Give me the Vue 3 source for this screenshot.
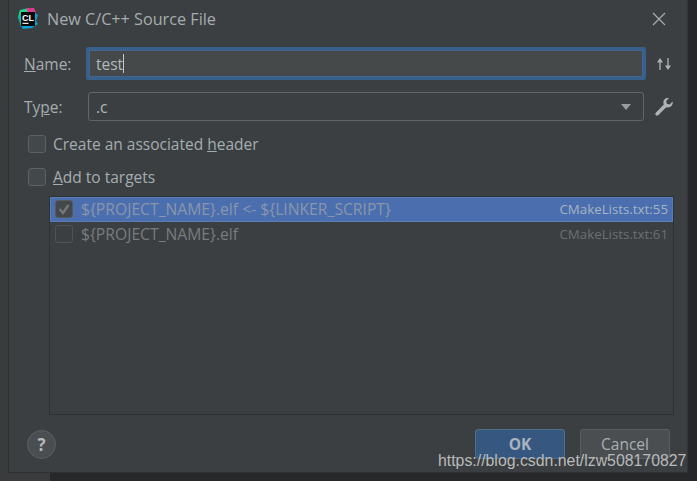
<script setup>
const targets = [
  { name: '${PROJECT_NAME}.elf <- ${LINKER_SCRIPT}', file: 'CMakeLists.txt:55', checked: true },
  { name: '${PROJECT_NAME}.elf', file: 'CMakeLists.txt:61', checked: false },
]
</script>

<template>
  <div class="stage">
    <div class="top">
      <div class="edge-left"></div>
      <main class="dialog">
        <header class="titlebar">
          <svg class="logo" width="21" height="21" viewBox="0 0 21 21">
            <path d="M3 2 L12 0 L14 5 L5 12 L1 9 Z" fill="#21d789" />
            <path d="M1 9 L5 4 L7 16 L4 19 Z" fill="#15b8a6" />
            <path d="M9 0.5 L17 0 L19 5 L12 6 Z" fill="#e8368f" />
            <path d="M15 3 L21 7 L19 13 L21 16 L15 20 L6 21 L4 17 L16 14 Z" fill="#0a9fd8" />
            <rect x="4" y="4" width="14" height="14" fill="#0a0a0a" />
            <text x="5" y="12.6" class="logo-text">CL</text>
            <rect x="5.5" y="14.8" width="6" height="1.2" fill="#e8e8e8" />
          </svg>
          <span class="title">New C/C++ Source File</span>
          <svg class="close" width="14" height="14" viewBox="0 0 14 14">
            <path d="M1 1 L13 13 M13 1 L1 13" stroke="#a9adb0" stroke-width="1.2" fill="none" />
          </svg>
        </header>

        <div class="form-row name-row">
          <label class="label"><u>N</u>ame:</label>
          <div class="input focused"><span>test</span><i class="caret"></i></div>
          <svg class="side-icon" width="18" height="18" viewBox="0 0 18 18">
            <path d="M5 15 V5 M13 3 V13" stroke="#afb1b3" stroke-width="1.3" fill="none" />
            <path d="M2 7.5 L5 3 L8 7.5 Z M10 10.5 L13 15 L16 10.5 Z" fill="#afb1b3" />
          </svg>
        </div>

        <div class="form-row type-row">
          <label class="label">Ty<u>p</u>e:</label>
          <div class="input combo">
            <span>.c</span>
            <i class="arrow"></i>
          </div>
          <svg class="side-icon" width="20" height="20" viewBox="0 0 20 20">
            <path d="M18.6 4.6 L15.6 7.4 L12.8 6.8 L12.2 4 L15 1.2 C12 .4 9.2 2.6 9.4 5.8 C9.4 6.5 9.5 7 9.8 7.6 L2 15.4 C1 16.4 1.2 17.4 1.8 18 C2.5 18.8 3.6 18.9 4.5 18 L12.2 10.2 C15.8 11.2 19.6 8.6 18.6 4.6 Z" fill="#afb1b3" />
          </svg>
        </div>

        <label class="check-row first"><i class="box"></i><span>Create an associated <u>h</u>eader</span></label>
        <label class="check-row second"><i class="box"></i><span><u>A</u>dd to targets</span></label>

        <section class="list">
          <div v-for="t in targets" :key="t.file" class="item" :class="{ selected: t.checked }">
            <i class="mini-box">
              <svg v-if="t.checked" width="14" height="14" viewBox="0 0 14 14">
                <path d="M2.5 7 L6 11 L11.5 3" stroke="#74777a" stroke-width="2.4" fill="none" />
              </svg>
            </i>
            <span class="item-name">{{ t.name }}</span>
            <span class="item-file">{{ t.file }}</span>
          </div>
        </section>

        <footer class="footer">
          <button class="help">?</button>
          <div class="actions">
            <button class="btn primary">OK</button>
            <button class="btn">Cancel</button>
          </div>
        </footer>
      </main>
      <div class="edge-right"></div>
    </div>
    <div class="bottom"><div class="bottom-left"></div></div>
    <div class="watermark">https://blog.csdn.net/lzw508170827</div>
  </div>
</template>

<style>
html, body { margin: 0; background: #26282a; }
</style>

<style scoped>
.stage {
  position: relative;
  width: 697px;
  height: 481px;
  overflow: hidden;
  display: flex;
  flex-direction: column;
  background: #26282a;
  font-family: "Open Sans", "Noto Sans", sans-serif;
  font-size: 15.5px;
  color: #a4adb0;
}
.top { display: flex; height: 473px; }
.edge-left { width: 9px; background: #393b3d; border-right: 1px solid #2e3032; box-sizing: border-box; }
.edge-right { width: 9px; background: #26282a; }
.bottom { flex: 1; background: #26282a; }
.bottom-left { width: 50px; height: 100%; background: #393b3d; }
.dialog {
  width: 679px;
  background: #3c3f41;
  border-bottom: 1px solid #2e3032;
  border-right: 1px solid #323436;
  box-sizing: border-box;
  display: flex;
  flex-direction: column;
  padding-left: 40px;
  padding-right: 14px;
}
.titlebar { display: flex; align-items: center; height: 37px; margin-left: -31px; margin-right: -3px; }
.logo { margin-right: 9px; flex: none; margin-left: -1px; }
.logo-text { font: bold 9px "Liberation Sans", sans-serif; fill: #fff; }
.title { font-size: 16.2px; flex: 1; color: #a4adb0; }
.close { margin-right: 10px; }

.form-row { display: flex; align-items: center; margin-left: -25px; margin-right: -3px; }
.name-row { margin-top: 10px; height: 33px; }
.type-row { margin-top: 12px; height: 29px; }
.label { width: 63px; flex: none; color: #a4adb0; }
.input {
  box-sizing: border-box;
  height: 100%;
  flex: none;
  display: flex;
  align-items: center;
  color: #b0b8bb;
  background: #45494a;
}
.focused {
  width: 560px;
  margin-left: -1px;
  padding-left: 7px;
  background: #45494a;
  border: 3px solid #38608c;
  border-radius: 2px;
  box-shadow: inset 0 0 0 1px #41658f;
}
.caret { width: 1px; height: 19px; background: #c4c8ca; margin-left: 0; }
.combo {
  width: 556px;
  margin-left: 1px;
  padding: 0 12px 0 7px;
  justify-content: space-between;
  background: #3c3f41;
  border: 1px solid #646464;
  border-radius: 3px;
}
.arrow {
  width: 0; height: 0;
  border-left: 5.5px solid transparent;
  border-right: 5.5px solid transparent;
  border-top: 6px solid #9a9d9f;
}
.side-icon { flex: none; }
.name-row .side-icon { margin-left: 9px; }
.type-row .side-icon { margin-left: 10px; }

.check-row { display: flex; align-items: center; height: 18px; margin-left: -21px; gap: 7px; }
.check-row.first { margin-top: 14px; }
.check-row.second { margin-top: 15px; }
.box {
  width: 18px; height: 18px; box-sizing: border-box; flex: none;
  background: #43494a;
  border: 1px solid #5c6164;
  border-radius: 3px;
}

.list {
  height: 219px;
  margin-top: 10px;
  box-sizing: border-box;
  border: 1px solid #2f3133;
  font-size: 15.7px;
  width: 625px;
}
.item {
  height: 24.5px;
  display: flex;
  align-items: center;
  padding: 0 5px;
  color: #787c7f;
  box-sizing: border-box;
}
.item.selected {
  background: #4b6eaf;
  border: 1px solid #5a7db8;
  color: #8a96aa;
  padding: 0 4px;
}
.mini-box {
  width: 18px; height: 18px; box-sizing: border-box; flex: none;
  display: flex; align-items: center; justify-content: center;
  border: 1px solid #505254;
  border-radius: 3px;
  background: #3c3f41;
  margin-right: 8px;
}
.selected .mini-box { background: #45484b; border-color: #565a5e; }
.item-name { flex: 1; }
.item-file { font-size: 13.3px; color: #6b6f72; }
.selected .item-file { color: #a6b3c4; }

.footer { display: flex; justify-content: space-between; align-items: center; margin-left: -22px; margin-top: 14px; height: 30px; margin-right: 3px; }
.help {
  width: 29px; height: 29px; padding: 0;
  border-radius: 50%;
  border: 1px solid #5a5f62;
  background: #4a4e51;
  color: #b4b8ba;
  font: bold 17px "Open Sans", sans-serif;
}
.actions { display: flex; gap: 15px; }
.btn {
  width: 90px; height: 30px; padding: 0;
  border: 1px solid #5a5e60;
  border-radius: 3px;
  background: #4a4e50;
  color: #a8b0b3;
  font: 15.5px "Open Sans", sans-serif;
}
.btn.primary {
  background: #365880;
  border-color: #4c708c;
  color: #a8b4c0;
  font-weight: 700;
}
.watermark {
  position: absolute;
  left: 438px;
  top: 452px;
  font: 15.85px "Liberation Sans", sans-serif;
  color: #b9babb;
  white-space: nowrap;
}
</style>
